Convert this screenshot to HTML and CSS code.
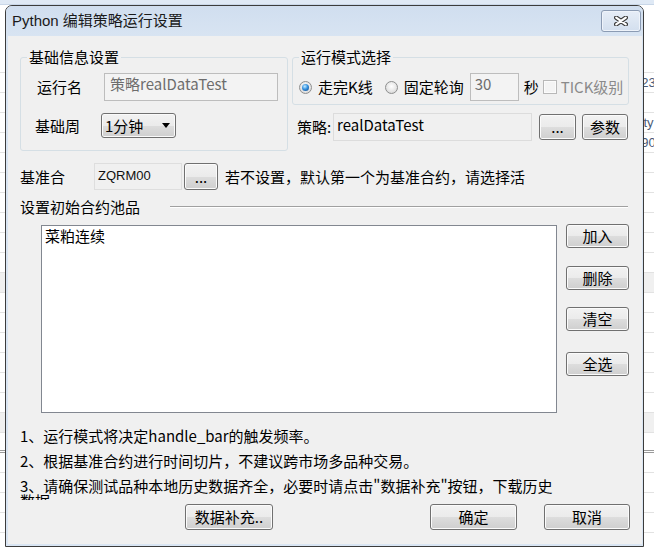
FILE: index.html
```html
<!DOCTYPE html>
<html lang="zh-CN">
<head>
<meta charset="utf-8">
<title>Python 编辑策略运行设置</title>
<link rel="stylesheet" href="styles.css">
</head>
<body>
<div class="app">
  <div class="app-top"></div>
  <div class="app-rows">
    <div class="app-row"></div>
    <div class="app-row"><span>1234</span></div>
    <div class="app-row"></div>
    <div class="app-row"><span>city</span></div>
    <div class="app-row"><span>190</span></div>
    <div class="app-row"></div>
    <div class="app-row"></div>
    <div class="app-row"></div>
    <div class="app-row"></div>
    <div class="app-row"></div>
    <div class="app-row"></div>
    <div class="app-row shade"></div>
    <div class="app-row"></div>
    <div class="app-row"></div>
    <div class="app-row"></div>
    <div class="app-row"></div>
    <div class="app-row"></div>
    <div class="app-row"></div>
    <div class="app-row shade"></div>
    <div class="app-row double"></div>
    <div class="app-row"></div>
    <div class="app-row"></div>
    <div class="app-row"></div>
    <div class="app-row"></div>
  </div>
</div>

<div class="window">
  <div class="titlebar">
    <span class="title">Python 编辑策略运行设置</span>
    <button class="close" aria-label="关闭">
      <svg width="14" height="10" viewBox="0 0 14 10">
        <path d="M2.2 1.6 L11.8 8.4 M11.8 1.6 L2.2 8.4" stroke="#3b3b3b" stroke-width="4.4" stroke-linecap="round" fill="none"/>
        <path d="M2.2 1.6 L11.8 8.4 M11.8 1.6 L2.2 8.4" stroke="#ffffff" stroke-width="2.2" stroke-linecap="round" fill="none"/>
      </svg>
    </button>
  </div>

  <div class="client">
    <div class="top">
      <fieldset class="group g-basic">
        <legend>基础信息设置</legend>
        <div class="g-inner basic-inner">
          <div class="frow">
            <span class="flabel">运行名</span>
            <div class="edit edit-name">策略realDataTest</div>
          </div>
          <div class="frow r-period">
            <span class="flabel">基础周</span>
            <div class="combo"><span>1分钟</span><span class="arrow"></span></div>
          </div>
        </div>
      </fieldset>

      <div class="right-col">
        <fieldset class="group g-mode">
          <legend>运行模式选择</legend>
          <div class="g-inner mode-row">
            <span class="radio checked"></span><span class="rlabel">走完K线</span>
            <span class="radio r2"></span><span class="rlabel">固定轮询</span>
            <div class="edit edit-sec">30</div>
            <span class="sec">秒</span>
            <span class="check"></span><span class="tick">TICK级别</span>
          </div>
        </fieldset>
        <div class="strategy-row">
          <span class="slabel">策略:</span>
          <div class="edit edit-strat">realDataTest</div>
          <button class="btn btn-browse">...</button>
          <button class="btn btn-param">参数</button>
        </div>
      </div>
    </div>

    <div class="bench-row">
      <span class="blabel">基准合</span>
      <div class="edit edit-bench">ZQRM00</div>
      <button class="btn btn-bench">...</button>
      <span class="bhint">若不设置，默认第一个为基准合约，请选择活</span>
    </div>

    <div class="pool-head">
      <span>设置初始合约池品</span>
      <span class="rule"></span>
    </div>

    <div class="pool">
      <div class="list">
        <div class="item">菜粕连续</div>
      </div>
      <div class="pool-btns">
        <button class="btn pbtn">加入</button>
        <button class="btn pbtn">删除</button>
        <button class="btn pbtn">清空</button>
        <button class="btn pbtn">全选</button>
      </div>
    </div>

    <div class="notes">
      <p>1、运行模式将决定handle_bar的触发频率。</p>
      <p>2、根据基准合约进行时间切片，不建议跨市场多品种交易。</p>
      <p class="clip">3、请确保测试品种本地历史数据齐全，必要时请点击"数据补充"按钮，下载历史数据</p>
    </div>

    <div class="actions">
      <button class="btn act-data">数据补充..</button>
      <button class="btn act-ok">确定</button>
      <button class="btn act-cancel">取消</button>
    </div>
  </div>
</div>
</body>
</html>
```

FILE: styles.css
```css
* { box-sizing: border-box; }

html, body {
  margin: 0;
  padding: 0;
}

body {
  width: 654px;
  height: 551px;
  overflow: hidden;
  position: relative;
  background: #ffffff;
  font-family: "Noto Sans CJK SC", "Liberation Sans", sans-serif;
  font-size: 15px;
  color: #000;
}

/* ---------- background application ---------- */
.app {
  position: absolute;
  inset: 0;
}
.app-top {
  height: 5px;
  background: #dfe9f5;
  border-bottom: 1px solid #c9d7e8;
}
.app-rows {
  margin-top: 48px;
}
.app-row {
  height: 20px;
  border-bottom: 1px solid #e2e2e2;
  font-family: "Liberation Sans", sans-serif;
  font-size: 13px;
  line-height: 20px;
  color: #4a5a78;
  padding-left: 634px;
  white-space: nowrap;
  overflow: hidden;
}
.app-row.shade { background: #f0f0f0; }
.app-row.double { border-bottom: 3px double #9a9a9a; }

/* ---------- window ---------- */
.window {
  position: absolute;
  left: 5px;
  top: 5px;
  width: 639px;
  height: 542px;
  border: 1px solid #3c3c3c;
  border-radius: 7px 7px 0 0;
  background: #d9e5f3;
  display: flex;
  flex-direction: column;
}

.titlebar {
  height: 30px;
  flex: none;
  display: flex;
  align-items: flex-start;
  justify-content: space-between;
  padding-left: 6px;
  border-radius: 6px 6px 0 0;
  background: linear-gradient(#d0deef, #d8e4f2);
}
.title {
  font-family: "Liberation Sans", "Noto Sans CJK SC", sans-serif;
  font-size: 15px;
  line-height: 30px;
  color: #1a1a1a;
}
.close {
  margin: 4px 2px 0 0;
  width: 40px;
  height: 22px;
  padding: 0;
  border: 1px solid #8b9bb3;
  border-radius: 3px;
  background: linear-gradient(#e6edf7, #d3dfee);
  box-shadow: inset 0 0 0 1px #eef3fa;
  display: flex;
  align-items: center;
  justify-content: center;
}
.close svg { display: block; }

.client {
  width: 634px;
  height: 508px;
  flex: none;
  margin: 0 1px 2px 2px;
  background: #f0f0f0;
  padding: 12px 12px 0 12px;
  display: flex;
  flex-direction: column;
}

/* ---------- group boxes ---------- */
.top {
  display: flex;
  gap: 4px;
  align-items: flex-start;
}
.group {
  margin: 0;
  padding: 0;
  min-width: 0;
  border: 1px solid #d5dfe5;
  border-radius: 3px;
}
.group legend {
  margin-left: 6px;
  padding: 0 2px;
  font-size: 15px;
  line-height: 18px;
}
.g-basic { width: 268px; }
.right-col { width: 337px; }

.basic-inner {
  padding: 7px 0 12px 16px;
}
.frow {
  display: flex;
  align-items: center;
}
.frow + .frow { margin-top: 12px; }
.flabel {
  width: 67px;
  line-height: 18px;
}
.r-period .flabel {
  margin-left: -2px;
  width: 66px;
}

.edit {
  height: 28px;
  padding: 2px 5px 0;
  border: 1px solid #bdbdbd;
  background: #f3f3f3;
  font-size: 15px;
  line-height: 18px;
  white-space: nowrap;
  overflow: hidden;
}
.edit-name {
  width: 174px;
  color: #6d6d6d;
  padding-top: 1px;
}

.combo {
  width: 75px;
  height: 25px;
  border: 1px solid #707070;
  border-radius: 3px;
  background: linear-gradient(#f2f2f2 0%, #ebebeb 50%, #dddddd 51%, #cfcfcf 100%);
  box-shadow: inset 0 0 0 1px #fafafa;
  display: flex;
  align-items: center;
  padding-left: 3px;
  line-height: 18px;
}
.arrow {
  margin-left: auto;
  margin-right: 5px;
  width: 0;
  height: 0;
  border-left: 4px solid transparent;
  border-right: 4px solid transparent;
  border-top: 5px solid #000;
}

/* mode group */
.mode-row {
  display: flex;
  align-items: center;
  height: 38px;
  padding: 7px 0 3px 6px;
  line-height: 18px;
}
.radio {
  flex: none;
  position: relative;
  width: 13px;
  height: 13px;
  border-radius: 50%;
  border: 1px solid #8e8f8f;
  background: radial-gradient(circle at 50% 40%, #ffffff 0%, #e4e4e4 60%, #cbcbcb 100%);
}
.radio.checked::after {
  content: "";
  position: absolute;
  left: 2px;
  top: 2px;
  width: 7px;
  height: 7px;
  border-radius: 50%;
  background: radial-gradient(circle at 40% 35%, #c6ecff 0%, #3592e0 45%, #0d3e7c 100%);
}
.rlabel { margin-left: 6px; }
.radio.r2 { margin-left: 12px; }
.edit-sec {
  width: 49px;
  margin-left: 6px;
  color: #6d6d6d;
  padding-left: 4px;
  padding-top: 1px;
}
.sec { margin-left: 5px; }
.check {
  flex: none;
  width: 14px;
  height: 14px;
  margin-left: 4px;
  border: 1px solid #b8b8b8;
  background: #f4f4f4;
  box-shadow: inset 0 0 0 1px #fbfbfb;
}
.tick {
  margin-left: 4px;
  color: #8a8a8a;
}

/* strategy row */
.strategy-row {
  margin-top: 8px;
  padding-left: 5px;
  display: flex;
  align-items: center;
}
.slabel {
  width: 36px;
  line-height: 18px;
}
.edit-strat {
  width: 199px;
  border-color: #dcdcdc;
  background: #f0f0f0;
  padding-left: 3px;
}

/* buttons */
.btn {
  padding: 0;
  border: 1px solid #707070;
  border-radius: 3px;
  background: linear-gradient(#f2f2f2 0%, #ebebeb 50%, #dddddd 51%, #cfcfcf 100%);
  box-shadow: inset 0 0 0 1px #fbfbfb;
  font-family: "Noto Sans CJK SC", "Liberation Sans", sans-serif;
  font-size: 15px;
  line-height: 18px;
  color: #000;
  white-space: nowrap;
}
.btn-browse {
  width: 37px;
  height: 26px;
  margin-left: 7px;
}
.btn-param {
  width: 46px;
  height: 26px;
  margin-left: 6px;
}

/* bench row */
.bench-row {
  margin-top: 12px;
  display: flex;
  align-items: center;
  height: 27px;
}
.blabel { width: 74px; }
.edit-bench {
  width: 88px;
  height: 27px;
  border-color: #dedede;
  background: #f0f0f0;
  font-family: "Liberation Sans", sans-serif;
  font-size: 13px;
  padding-left: 3px;
  padding-top: 3px;
  color: #111;
}
.btn-bench {
  width: 34px;
  height: 27px;
  margin-left: 2px;
}
.bhint { margin-left: 7px; }

/* pool */
.pool-head {
  margin-top: 6px;
  height: 20px;
  display: flex;
  align-items: center;
}
.rule {
  flex: 1;
  margin: 2px 2px 0 30px;
  height: 2px;
  border-top: 1px solid #a0a0a0;
  border-bottom: 1px solid #ffffff;
}

.pool {
  margin-top: 9px;
  display: flex;
  align-items: flex-start;
}
.list {
  margin-left: 21px;
  width: 516px;
  height: 188px;
  border: 1px solid #828790;
  background: #ffffff;
}
.item {
  padding: 1px 3px;
  line-height: 18px;
}
.pool-btns {
  margin-left: 9px;
  display: flex;
  flex-direction: column;
}
.pbtn {
  width: 63px;
  height: 24px;
}
.pbtn:nth-child(1) { margin-top: -1px; }
.pbtn:nth-child(2) { margin-top: 18px; }
.pbtn:nth-child(3) { margin-top: 17px; }
.pbtn:nth-child(4) { margin-top: 21px; }

/* notes */
.notes {
  margin-top: 15px;
  width: 540px;
}
.notes p {
  margin: 0;
  line-height: 15px;
}
.notes p + p { margin-top: 10px; }
.notes p.clip {
  height: 22px;
  overflow: hidden;
}

/* actions */
.actions {
  margin-top: 4px;
  display: flex;
}
.actions .btn { height: 26px; }
.act-data {
  width: 88px;
  margin-left: 165px;
}
.act-ok {
  width: 87px;
  margin-left: auto;
}
.act-cancel {
  width: 86px;
  margin-left: 27px;
}
```
